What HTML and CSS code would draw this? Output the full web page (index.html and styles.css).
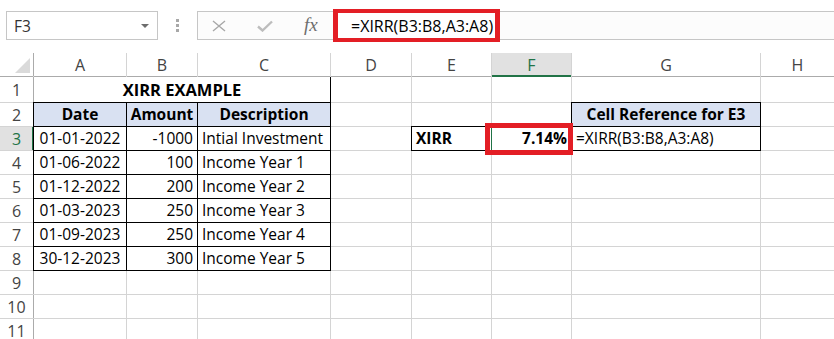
FILE: index.html
```html
<!DOCTYPE html>
<html lang="en">
<head>
    <meta charset="UTF-8">
    <meta name="viewport" content="width=device-width, initial-scale=1.0">
    <title>XIRR Example</title>
    <link rel="stylesheet" href="styles.css">
</head>
<body>
    <!-- Name box + formula bar -->
    <div class="toolbar">
        <div class="name-box">
            <span class="name-text">F3</span>
            <span class="caret"></span>
        </div>
        <div class="grip"><i></i><i></i><i></i></div>
        <div class="formula-bar">
            <div class="fx-buttons">
                <svg class="icon-cancel" width="16" height="12" viewBox="0 0 16 12">
                    <path d="M2 1 L14 11 M14 1 L2 11" stroke="#a8a8a8" stroke-width="1.4" fill="none"/>
                </svg>
                <svg class="icon-enter" width="16" height="12" viewBox="0 0 16 12">
                    <path d="M1 6.5 L5.5 10.5 L15 1.5" stroke="#bdbdbd" stroke-width="2.4" fill="none"/>
                </svg>
                <span class="fx">fx</span>
            </div>
            <div class="formula-input">
                <span class="formula-text">=XIRR(B3:B8,A3:A8)</span>
            </div>
        </div>
    </div>

    <!-- Worksheet grid -->
    <div class="sheet">
        <div class="corner"><span class="select-all"></span></div>
        <div class="hd">A</div><div class="hd">B</div><div class="hd">C</div><div class="hd">D</div>
        <div class="hd">E</div><div class="hd sel">F</div><div class="hd">G</div><div class="hd">H</div>

        <div class="rh">1</div>
        <div class="c title">XIRR EXAMPLE</div>
        <div class="c"></div><div class="c"></div><div class="c"></div><div class="c"></div><div class="c"></div>

        <div class="rh">2</div>
        <div class="c b fill bold ctr">Date</div>
        <div class="c b fill bold ctr">Amount</div>
        <div class="c b fill bold ctr">Description</div>
        <div class="c"></div><div class="c"></div><div class="c"></div>
        <div class="c b fill bold ctr">Cell Reference for E3</div>
        <div class="c"></div>

        <div class="rh sel">3</div>
        <div class="c b ctr">01-01-2022</div>
        <div class="c b r">-1000</div>
        <div class="c b">Intial Investment</div>
        <div class="c"></div>
        <div class="c b bold">XIRR</div>
        <div class="c active bold r">7.14%</div>
        <div class="c b">=XIRR(B3:B8,A3:A8)</div>
        <div class="c"></div>

        <div class="rh">4</div>
        <div class="c b ctr">01-06-2022</div><div class="c b r">100</div><div class="c b">Income Year 1</div>
        <div class="c"></div><div class="c"></div><div class="c"></div><div class="c"></div><div class="c"></div>

        <div class="rh">5</div>
        <div class="c b ctr">01-12-2022</div><div class="c b r">200</div><div class="c b">Income Year 2</div>
        <div class="c"></div><div class="c"></div><div class="c"></div><div class="c"></div><div class="c"></div>

        <div class="rh">6</div>
        <div class="c b ctr">01-03-2023</div><div class="c b r">250</div><div class="c b">Income Year 3</div>
        <div class="c"></div><div class="c"></div><div class="c"></div><div class="c"></div><div class="c"></div>

        <div class="rh">7</div>
        <div class="c b ctr">01-09-2023</div><div class="c b r">250</div><div class="c b">Income Year 4</div>
        <div class="c"></div><div class="c"></div><div class="c"></div><div class="c"></div><div class="c"></div>

        <div class="rh">8</div>
        <div class="c b ctr">30-12-2023</div><div class="c b r">300</div><div class="c b">Income Year 5</div>
        <div class="c"></div><div class="c"></div><div class="c"></div><div class="c"></div><div class="c"></div>

        <div class="rh">9</div>
        <div class="c"></div><div class="c"></div><div class="c"></div><div class="c"></div>
        <div class="c"></div><div class="c"></div><div class="c"></div><div class="c"></div>

        <div class="rh">10</div>
        <div class="c"></div><div class="c"></div><div class="c"></div><div class="c"></div>
        <div class="c"></div><div class="c"></div><div class="c"></div><div class="c"></div>

        <div class="rh">11</div>
        <div class="c"></div><div class="c"></div><div class="c"></div><div class="c"></div>
        <div class="c"></div><div class="c"></div><div class="c"></div><div class="c"></div>
    </div>
</body>
</html>
```

FILE: styles.css
```css
/* Base */
* {
    margin: 0;
    padding: 0;
    box-sizing: border-box;
}

body {
    font-family: 'Open Sans', 'Noto Sans', sans-serif;
    color: #000;
    background: #fff;
    width: 834px;
    height: 339px;
    overflow: hidden;
}

/* Name box and formula bar */
.toolbar {
    display: flex;
    align-items: flex-start;
    height: 53px;
    padding-top: 11px;
}

.name-box {
    display: flex;
    align-items: center;
    justify-content: space-between;
    width: 152px;
    height: 29px;
    margin-left: 6px;
    padding: 0 8px 0 7px;
    border: 1px solid #c6c6c6;
    background: #fff;
}

.name-text {
    font-size: 15.5px;
    color: #333;
}

.caret {
    width: 0;
    height: 0;
    border-left: 4px solid transparent;
    border-right: 4px solid transparent;
    border-top: 4px solid #6d6d6d;
    margin-top: 1px;
}

.grip {
    width: 39px;
    height: 29px;
    display: flex;
    flex-direction: column;
    align-items: center;
    justify-content: center;
    gap: 2px;
}

.grip i {
    display: block;
    width: 3px;
    height: 3px;
    background: #a8a8a8;
}

.formula-bar {
    flex: 1;
    display: flex;
    height: 29px;
    border: 1px solid #c6c6c6;
    border-right: none;
    background: #fcfcfc;
}

.fx-buttons {
    width: 135px;
    display: flex;
    align-items: center;
    padding-left: 13px;
}

.icon-cancel {
    margin-right: 30px;
}

.icon-enter {
    margin-right: 31px;
}

.fx {
    font-family: 'Liberation Serif', 'DejaVu Serif', serif;
    font-style: italic;
    font-size: 19px;
    color: #6e6e6e;
    margin-top: -2px;
}

.formula-input {
    flex: 1;
    display: flex;
    align-items: center;
}

.formula-text {
    display: flex;
    align-items: center;
    flex-shrink: 0;
    width: 167px;
    height: 33px;
    padding-left: 13px;
    border: 4px solid #e31e25;
    border-left-width: 5px;
    border-right-width: 5px;
    font-size: 16px;
    white-space: nowrap;
    background: #fff;
}

/* Worksheet */
.sheet {
    display: grid;
    grid-template-columns: 33px 92px 70px 132px 80px 79px 79px 188px 1fr;
    grid-template-rows: 23px 25px repeat(10, 23px);
    gap: 1px;
    background: #d4d4d4;
}

.corner,
.hd,
.rh {
    background: #fff;
    color: #444;
    font-size: 16px;
    display: flex;
    align-items: center;
    justify-content: center;
}

.corner {
    position: relative;
    box-shadow: 0 1px 0 #ababab, 1px 0 0 #ababab;
}

.select-all {
    position: absolute;
    right: 3px;
    bottom: 3px;
    width: 0;
    height: 0;
    border-left: 15px solid transparent;
    border-bottom: 15px solid #dadada;
}

.hd {
    box-shadow: 0 1px 0 #ababab;
}

.rh {
    box-shadow: 1px 0 0 #ababab;
}

.hd.sel {
    background: #e1e1e1;
    color: #217346;
    box-shadow: inset 0 -1px 0 #217346, 0 1px 0 #217346;
}

.rh.sel {
    background: #e1e1e1;
    color: #217346;
    box-shadow: inset -1px 0 0 #217346, 1px 0 0 #217346;
}

/* Cells */
.c {
    background: #fff;
    font-size: 15.5px;
    line-height: 1;
    display: flex;
    align-items: center;
    padding: 0 4px;
    white-space: nowrap;
}

.c.title {
    grid-column: span 3;
    justify-content: center;
    font-size: 16.5px;
    font-weight: 700;
    box-shadow: 1px 0 0 #000;
    padding-top: 2px;
}

.c.b {
    box-shadow: 0 0 0 1px #000;
}

.c.fill {
    background: #d9e1f2;
}

.bold {
    font-weight: 700;
}

.ctr {
    justify-content: center;
}

.r {
    justify-content: flex-end;
}

/* Active cell marked with a red frame */
.c.active {
    position: relative;
    box-shadow: -1px 0 0 #217346;
}

.c.active::after {
    content: "";
    position: absolute;
    top: -4px;
    left: -7px;
    right: -2px;
    bottom: -5px;
    border: 5px solid #e31e25;
}
```
